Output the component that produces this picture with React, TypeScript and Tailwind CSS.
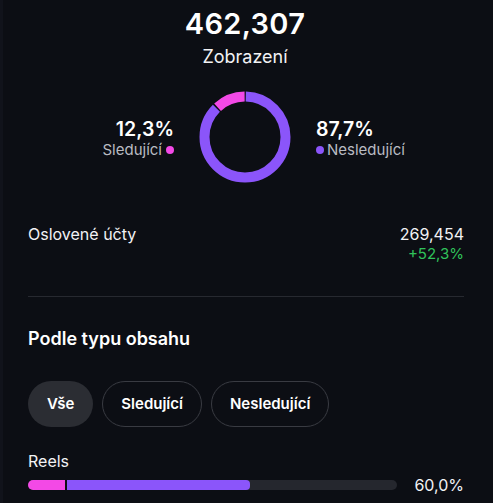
import React from 'react'

const PURPLE = '#8b55fa'
const PINK = '#f349e6'

function Donut({ share }: { share: number }) {
  // share = part for pink segment, drawn counter-clockwise from top
  const r = 40.5
  const c = 2 * Math.PI * r
  const gap = 1.6
  const pink = c * share
  const purple = c - pink
  return (
    <svg width="92" height="92" viewBox="0 0 92 92">
      <g transform="rotate(-90 46 46)">
        <circle
          cx="46"
          cy="46"
          r={r}
          fill="none"
          stroke={PURPLE}
          strokeWidth="10"
          strokeDasharray={`${purple - gap} ${c}`}
          strokeDashoffset={-gap / 2}
        />
        <circle
          cx="46"
          cy="46"
          r={r}
          fill="none"
          stroke={PINK}
          strokeWidth="10"
          strokeDasharray={`${pink - gap} ${c}`}
          strokeDashoffset={-(purple + gap / 2)}
        />
      </g>
    </svg>
  )
}

export default function App() {
  return (
    <div
      className="w-[493px] h-[503px] overflow-hidden bg-[#0c0e14] text-white flex"
      style={{ fontFamily: 'Inter, "Noto Sans", sans-serif' }}
    >
      <div className="w-[3px] bg-[#11131b] shrink-0" />
      <div className="flex-1 pl-[25px] pr-[29px]">
        {/* header total */}
        <div className="flex flex-col items-center pt-[6px] ml-[-2px]">
          <div className="text-[29px] font-semibold leading-[36px] tracking-[0.3px]">462,307</div>
          <div className="text-[18px] leading-[24px] mt-[3px] text-[#f2f2f4]">Zobrazení</div>
        </div>

        {/* donut row */}
        <div className="flex items-center justify-center mt-[22px] ml-[-2px]">
          <div className="flex flex-col items-end w-[100px] mr-[5px] mt-[3px]">
            <div className="text-[19.5px] font-semibold leading-[22px]">12,3%</div>
            <div className="flex items-center gap-[4px] text-[15px] leading-[20px] text-[#b9bbc2]">
              Sledující
              <span className="w-[8px] h-[8px] rounded-full bg-[#f349e6]" />
            </div>
          </div>
          <div className="mx-[20px]">
            <Donut share={0.123} />
          </div>
          <div className="flex flex-col items-start w-[100px] ml-[5px] mt-[3px]">
            <div className="text-[19.5px] font-semibold leading-[22px]">87,7%</div>
            <div className="flex items-center gap-[3px] text-[15px] leading-[20px] text-[#b9bbc2]">
              <span className="w-[8px] h-[8px] rounded-full bg-[#8b55fa]" />
              Nesledující
            </div>
          </div>
        </div>

        {/* reached accounts */}
        <div className="flex justify-between mt-[41px]">
          <div className="text-[16px] leading-[20px] text-[#f2f2f4]">Oslovené účty</div>
          <div className="flex flex-col items-end">
            <div className="text-[16px] leading-[20px] text-[#f2f2f4]">269,454</div>
            <div className="text-[15px] leading-[19px] text-[#30c25b]">+52,3%</div>
          </div>
        </div>

        <div className="h-[1px] bg-[#272930] mt-[33px]" />

        <div className="text-[18px] font-semibold leading-[24px] mt-[30px]">Podle typu obsahu</div>

        {/* filter pills */}
        <div className="flex gap-[9px] mt-[30px]">
          <button className="h-[46px] px-[19px] rounded-full bg-[#2b2d33] text-[15px] font-semibold">
            Vše
          </button>
          <button className="h-[46px] px-[18px] rounded-full border border-[#393b42] text-[15px] font-semibold">
            Sledující
          </button>
          <button className="h-[46px] px-[18px] rounded-full border border-[#393b42] text-[15px] font-semibold">
            Nesledující
          </button>
        </div>

        {/* Reels */}
        <div className="text-[16px] leading-[20px] mt-[24px] text-[#f2f2f4]">Reels</div>
        <div className="flex items-center mt-[4px]">
          <div className="w-[369px] h-[10px] rounded-full bg-[#25272e] flex overflow-hidden">
            <div className="w-[37px] h-full bg-[#f349e6]" />
            <div className="w-[2px] h-full bg-[#0c0e14]" />
            <div className="w-[183px] h-full bg-[#8b55fa] rounded-r-[4px]" />
          </div>
          <div className="flex-1 text-right text-[16px] leading-[20px] text-[#f2f2f4]">60,0%</div>
        </div>
      </div>
    </div>
  )
}
